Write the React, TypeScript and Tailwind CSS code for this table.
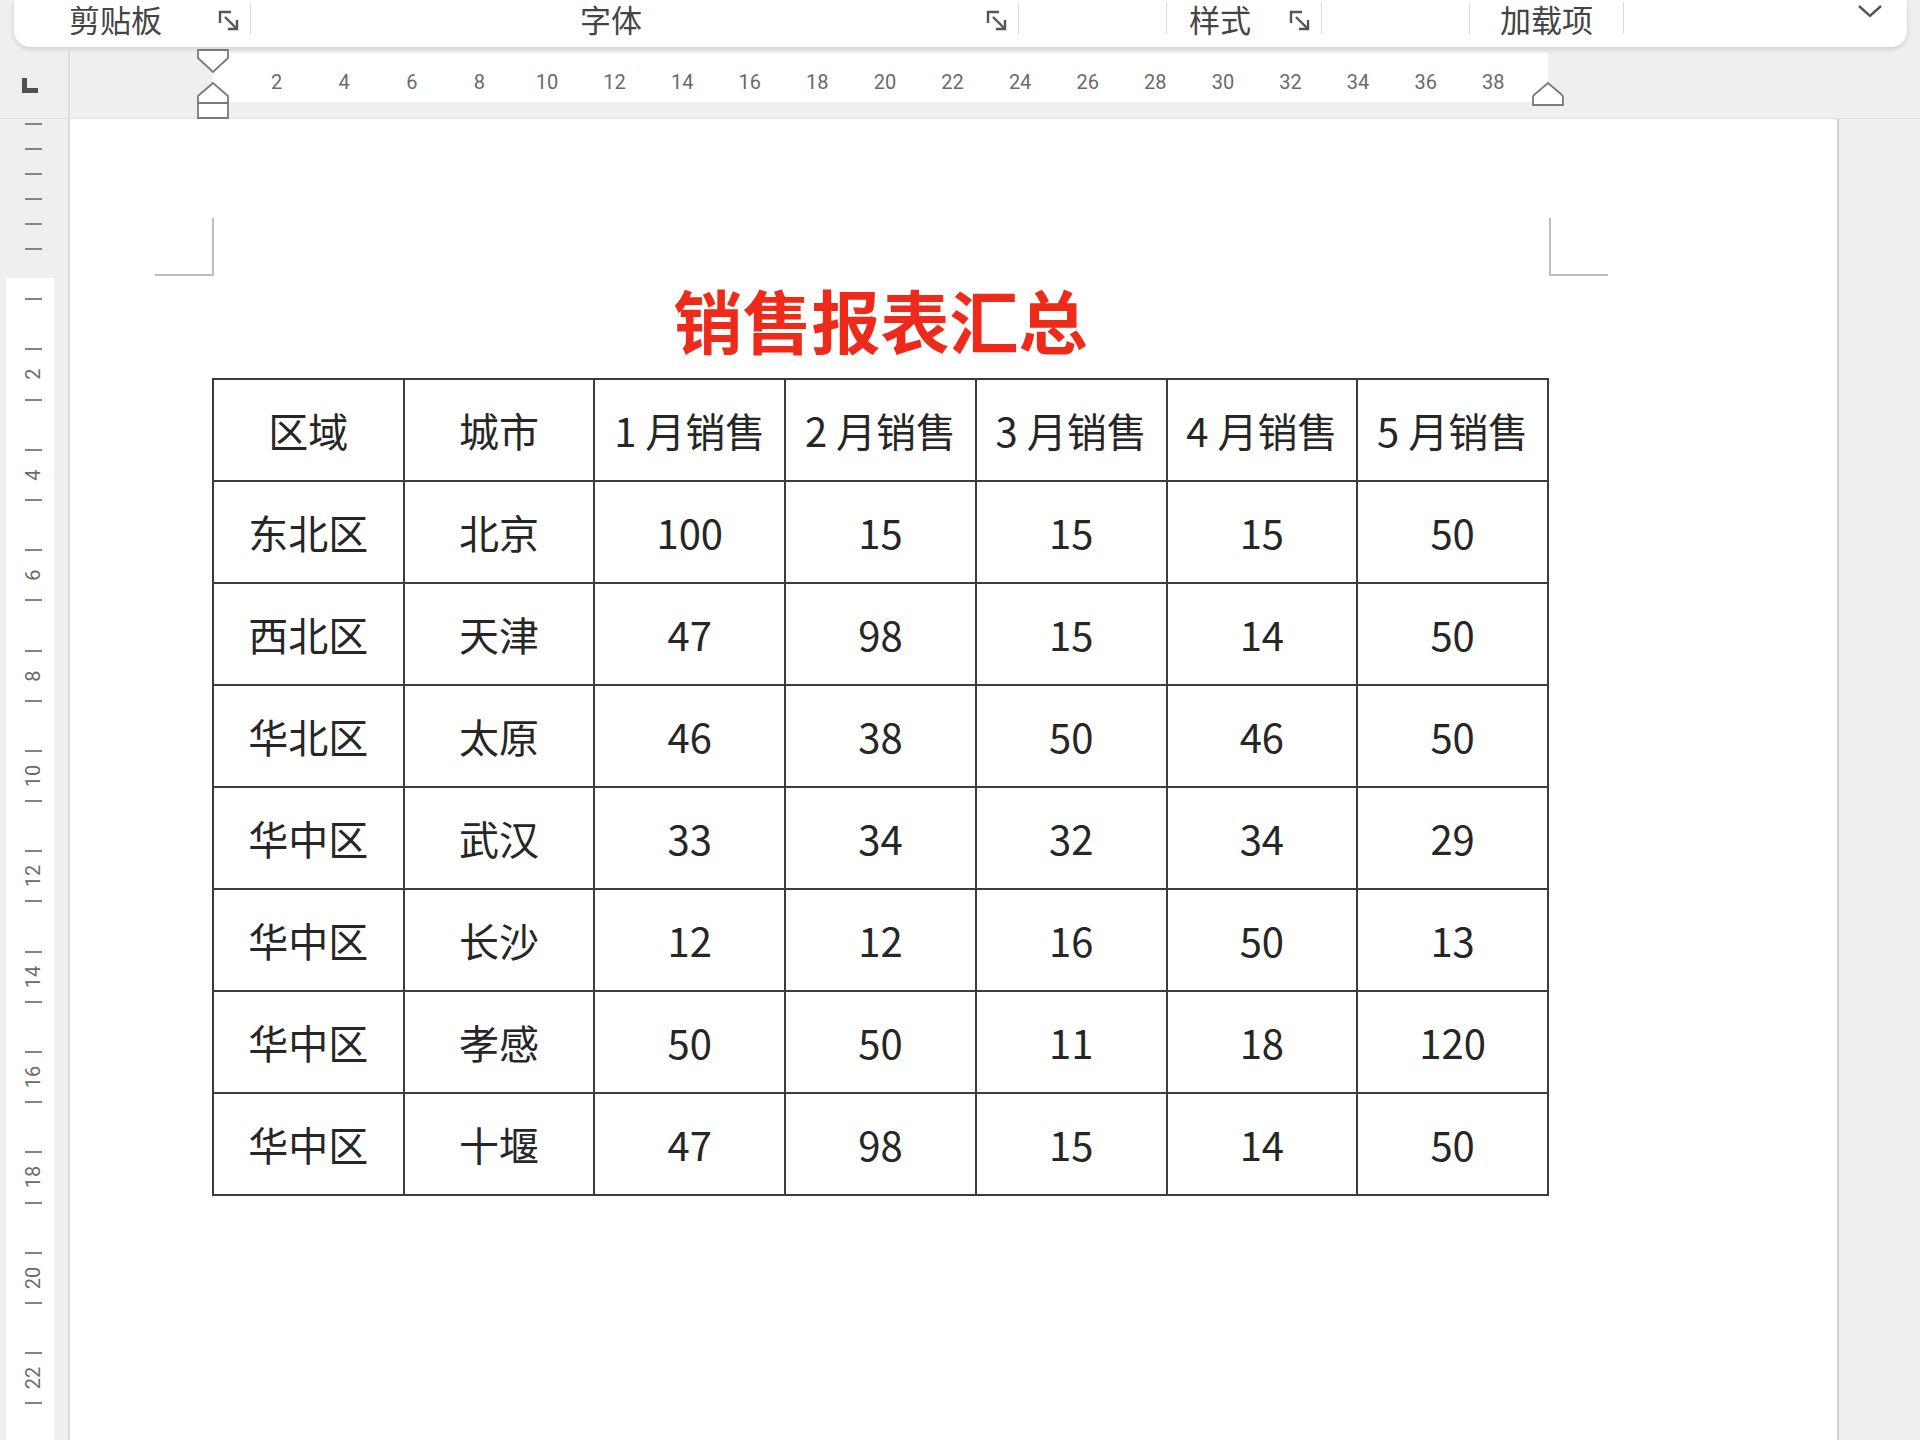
import React from 'react'

const header = ['区域', '城市', '1 月销售', '2 月销售', '3 月销售', '4 月销售', '5 月销售']

const rows: (string | number)[][] = [
  ['东北区', '北京', 100, 15, 15, 15, 50],
  ['西北区', '天津', 47, 98, 15, 14, 50],
  ['华北区', '太原', 46, 38, 50, 46, 50],
  ['华中区', '武汉', 33, 34, 32, 34, 29],
  ['华中区', '长沙', 12, 12, 16, 50, 13],
  ['华中区', '孝感', 50, 50, 11, 18, 120],
  ['华中区', '十堰', 47, 98, 15, 14, 50],
]

// half-unit steps on the vertical ruler, negatives are the top margin
const vSteps = Array.from({ length: 54 }, (_, k) => k - 6)
const hLabels = Array.from({ length: 19 }, (_, i) => (i + 1) * 2)

const Launcher = () => (
  <svg width="24" height="24" viewBox="0 0 24 24" fill="none" stroke="#555" strokeWidth="2.4">
    <path d="M3 14V3h11" />
    <path d="M8 8l11 11" />
    <path d="M20 11v9h-9" />
  </svg>
)

const Sep = ({ ml }: { ml: string }) => <div className={`${ml} h-[32px] w-px bg-[#dadada]`} />

const Ribbon = () => (
  <div className="ml-[14px] h-[47px] w-[1893px] rounded-b-[16px] bg-white shadow-[0_2px_5px_rgba(0,0,0,0.14)]">
    <div className="flex items-start pt-[2px] text-[31px] leading-[34px] text-[#444]">
      <span className="ml-[55px]">剪贴板</span>
      <div className="ml-[55px] mt-[7px]"><Launcher /></div>
      <Sep ml="ml-[9px]" />
      <span className="ml-[329px]">字体</span>
      <div className="ml-[343px] mt-[7px]"><Launcher /></div>
      <Sep ml="ml-[9px]" />
      <Sep ml="ml-[147px]" />
      <span className="ml-[22px]">样式</span>
      <div className="ml-[37px] mt-[7px]"><Launcher /></div>
      <Sep ml="ml-[9px]" />
      <Sep ml="ml-[147px]" />
      <span className="ml-[30px]">加载项</span>
      <Sep ml="ml-[30px]" />
      <svg className="ml-[233px] mt-[2px]" width="26" height="14" viewBox="0 0 26 14" fill="none" stroke="#555" strokeWidth="2.4">
        <path d="M2 2l11 10L24 2" />
      </svg>
    </div>
  </div>
)

const HRuler = () => (
  <div className="relative flex h-[72px] border-b border-[#e2e2e2]">
    <div className="w-[70px] border-r-2 border-[#dcdcdc] pl-[22px] pt-[31px]">
      <svg width="16" height="15" viewBox="0 0 16 15">
        <path d="M0 0h5v10h11v5H0z" fill="#505050" />
      </svg>
    </div>
    <div className="w-[143px]" />
    <div className="mt-[6px] flex h-[49px] w-[1335px] bg-white pl-[29.8px] pt-[19px] font-['Roboto',sans-serif] text-[20px] leading-[20px] text-[#6a6a6a]">
      {hLabels.map((n) => (
        <div key={n} className="w-[67.6px] shrink-0 text-center">{n}</div>
      ))}
    </div>
    <svg className="absolute left-[196px] top-0" width="34" height="72" viewBox="0 0 34 72" fill="#fff" stroke="#7a7a7a" strokeWidth="1.8">
      <path d="M2 3h30v8L17 25 2 11z" />
      <path d="M17 36l15 13v7H2v-7z" />
      <path d="M2 56h30v15H2z" />
    </svg>
    <svg className="absolute left-[1531px] top-0" width="34" height="72" viewBox="0 0 34 72" fill="#fff" stroke="#7a7a7a" strokeWidth="1.8">
      <path d="M17 36l14 12c1 1 1 2 1 3v7H2v-7c0-1 0-2 1-3z" />
    </svg>
  </div>
)

const VRuler = () => (
  <div className="w-[70px] shrink-0 overflow-hidden border-r-2 border-[#dcdcdc]">
    <div className="ml-[6px] mt-[-8px] w-[48px] font-['Roboto',sans-serif] text-[20px] leading-none text-[#6a6a6a]">
      {vSteps.map((p) => {
        const tick = p < 0 || p % 2 !== 0
        const label = p > 0 && p % 4 === 0
        const bg = p > 0 ? 'bg-white' : ''
        if (p === 0)
          return (
            <div key={p} className="h-[25.1px]">
              <div className="h-[16px]" />
              <div className="h-[9.1px] bg-white" />
            </div>
          )
        return (
          <div key={p} className={`flex h-[25.1px] items-center justify-center pl-[6px] ${bg}`}>
            {tick && <div className="h-[2px] w-[17px] bg-[#858585]" />}
            {label && <span className="block -rotate-90">{p / 2}</span>}
          </div>
        )
      })}
    </div>
  </div>
)

const SalesTable = () => (
  <table className="w-[1337px] table-fixed border-collapse text-[40px] text-[#262626]">
    <tbody>
      <tr>
        {header.map((h) => (
          <td key={h} className="h-[102px] border-2 border-[#3c3c3c] text-center align-middle">{h}</td>
        ))}
      </tr>
      {rows.map((r, i) => (
        <tr key={i}>
          {r.map((c, j) => (
            <td key={j} className="h-[102px] border-2 border-[#3c3c3c] text-center align-middle">{c}</td>
          ))}
        </tr>
      ))}
    </tbody>
  </table>
)

export default function App() {
  return (
    <div className="h-[1440px] w-[1920px] overflow-hidden bg-[#efefef] font-['Noto_Sans_CJK_SC','Noto_Sans',sans-serif]">
      <Ribbon />
      <HRuler />
      <div className="flex h-[1321px]">
        <VRuler />
        <div className="w-[1769px] shrink-0 border-r-2 border-[#cfcfcf] bg-white pt-[99px]">
          <div className="ml-[85px] flex w-[1453px] justify-between">
            <div className="h-[58px] w-[59px] border-b-2 border-r-2 border-[#bdbdbd]" />
            <div className="h-[58px] w-[59px] border-b-2 border-l-2 border-[#bdbdbd]" />
          </div>
          <div className="ml-[142px] w-[1337px]">
            <div className="h-[102px] pt-[9px] text-center text-[69px] font-bold leading-[69px] text-[#ee2a1b]">
              销售报表汇总
            </div>
            <SalesTable />
          </div>
        </div>
        <div className="flex-1" />
      </div>
    </div>
  )
}
